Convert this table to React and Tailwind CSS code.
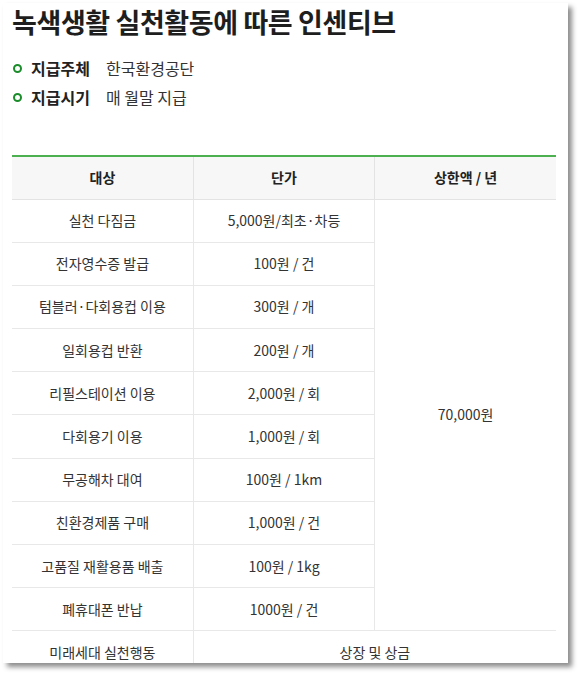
import React from 'react'

const rows = [
  ['실천 다짐금', '5,000원/최초·차등'],
  ['전자영수증 발급', '100원 / 건'],
  ['텀블러·다회용컵 이용', '300원 / 개'],
  ['일회용컵 반환', '200원 / 개'],
  ['리필스테이션 이용', '2,000원 / 회'],
  ['다회용기 이용', '1,000원 / 회'],
  ['무공해차 대여', '100원 / 1km'],
  ['친환경제품 구매', '1,000원 / 건'],
  ['고품질 재활용품 배출', '100원 / 1kg'],
  ['폐휴대폰 반납', '1000원 / 건'],
]

const App = () => {
  return (
    <div className="w-[581px] h-[676px] bg-white pt-[3px] pl-[3px] font-['Noto_Sans_CJK_KR',sans-serif]">
      <div className="w-[565px] h-[660px] bg-white overflow-hidden shadow-[4px_4px_5px_rgba(0,0,0,0.45)] pl-[9px] pr-[12px]">
        {/* Title */}
        <h2 className="text-[27px] leading-[37px] font-bold text-[#1e1e1e] tracking-[-0.4px] mt-[0px]">
          녹색생활 실천활동에 따른 인센티브
        </h2>

        {/* Info */}
        <ul className="mt-[18px] flex flex-col gap-[9px]">
          <li className="flex items-center h-[20px] text-[16px]">
            <span className="w-[9px] h-[9px] rounded-full border-[2px] border-[#1a8c2a] ml-[1px] mr-[9px]"></span>
            <span className="w-[75px] font-bold text-[#222]">지급주체</span>
            <span className="text-[#333]">한국환경공단</span>
          </li>
          <li className="flex items-center h-[20px] text-[16px]">
            <span className="w-[9px] h-[9px] rounded-full border-[2px] border-[#1a8c2a] ml-[1px] mr-[9px]"></span>
            <span className="w-[75px] font-bold text-[#222]">지급시기</span>
            <span className="text-[#333]">매 월말 지급</span>
          </li>
        </ul>

        {/* Table */}
        <table className="mt-[48px] w-[544px] table-fixed border-collapse text-[14px] text-[#333] border-t-2 border-[#4caf50]">
          <thead>
            <tr className="h-[43px] bg-[#f7f7f7] border-b border-[#e3e3e3]">
              <th className="font-bold text-[#222] border-r border-[#e3e3e3]">대상</th>
              <th className="font-bold text-[#222] border-r border-[#e3e3e3]">단가</th>
              <th className="font-bold text-[#222]">상한액 / 년</th>
            </tr>
          </thead>
          <tbody>
            {rows.map((row, index) => (
              <tr key={index} className="h-[43.2px] border-b border-[#e8e8e8]">
                <td className="text-center border-r border-[#e8e8e8]">{row[0]}</td>
                <td className="text-center border-r border-[#e8e8e8]">{row[1]}</td>
                {index === 0 && (
                  <td rowSpan={10} className="text-center">70,000원</td>
                )}
              </tr>
            ))}
            <tr className="h-[43px]">
              <td className="text-center border-r border-[#e8e8e8]">미래세대 실천행동</td>
              <td colSpan={2} className="text-center">상장 및 상금</td>
            </tr>
          </tbody>
        </table>
      </div>
    </div>
  )
}

export default App
